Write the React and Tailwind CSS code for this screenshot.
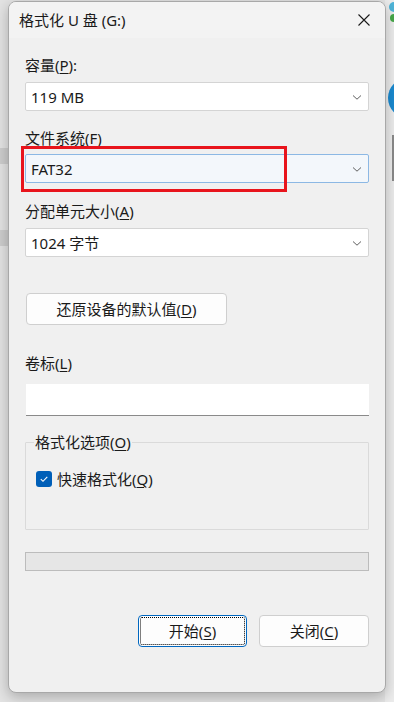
import React from 'react';

const font = { fontFamily: '"Noto Sans", "Noto Sans CJK SC", sans-serif' };

// Mnemonic label, e.g. 容量(P):
const Mn = ({ pre, k, post = ')' }) => (
    <span>
        {pre}(<span className="underline underline-offset-2 decoration-1">{k}</span>{post}
    </span>
);

const Chevron = () => (
    <svg width="12" height="12" viewBox="0 0 12 12" className="shrink-0">
        <path d="M2 4.5 L6 8.2 L10 4.5" fill="none" stroke="#606060" strokeWidth="1" />
    </svg>
);

const Select = ({ value, active }) => (
    <div
        className={`h-[29px] flex items-center justify-between pl-[5px] pr-[5px] rounded-[2px] border text-[15px] text-[#1a1a1a] ${
            active ? 'bg-[#f3f7fb] border-[#8cb8e4]' : 'bg-white border-[#d4d4d4]'
        }`}
    >
        <span className="leading-[20px]">{value}</span>
        <Chevron />
    </div>
);

const Label = ({ children, className = '' }) => (
    <div className={`text-[15px] leading-[20px] text-[#1a1a1a] ${className}`}>{children}</div>
);

export default function App() {
    return (
        <div className="relative w-[394px] h-[702px] bg-[#e3e3e3] overflow-hidden" style={font}>
            {/* background bits behind the dialog */}
            <div className="absolute left-0 top-[148px] w-[8px] h-[16px] bg-[#cdcdcd]" />
            <div className="absolute left-0 top-[230px] w-[8px] h-[16px] bg-[#cdcdcd]" />
            <div className="absolute right-0 top-0 w-[9px] h-[702px] bg-[#ececec]" />
            <div className="absolute left-[389px] top-[2px] w-[10px] h-[10px] rounded-full bg-[#4fb4d8]" />
            <div className="absolute left-[390px] top-[14px] w-[8px] h-[8px] rounded-full bg-[#46a848]" />
            <div className="absolute left-[388px] top-[78px] w-[40px] h-[40px] rounded-full bg-[#1a8ad0]" />
            <div className="absolute left-[392px] top-[135px] w-[4px] h-[46px] bg-[#8a8a8a]" />

            {/* dialog window */}
            <div className="absolute left-[8px] top-[1px] w-[378px] h-[692px] rounded-[8px] bg-[#f0f0f0] border border-[#a8a8a8] shadow-[0_4px_14px_rgba(0,0,0,0.25)] flex flex-col overflow-hidden">
                {/* title bar */}
                <div className="h-[36px] shrink-0 bg-[#f3f3f3] flex items-center justify-between pl-[10px] pr-[14px]">
                    <span className="text-[15px] leading-[20px] text-[#1a1a1a]">格式化 U 盘 (G:)</span>
                    <svg width="14" height="14" viewBox="0 0 14 14">
                        <path d="M1.5 1.5 L12.5 12.5 M12.5 1.5 L1.5 12.5" stroke="#1a1a1a" strokeWidth="1.1" />
                    </svg>
                </div>

                <div className="flex flex-col px-[16px]">
                    <Label className="mt-[17px]">
                        <Mn pre="容量" k="P" post="):" />
                    </Label>
                    <div className="mt-[7px]">
                        <Select value="119 MB" />
                    </div>

                    <Label className="mt-[17px]">
                        <Mn pre="文件系统" k="F" />
                    </Label>
                    <div className="mt-[6px]">
                        <Select value="FAT32" active />
                    </div>

                    <Label className="mt-[18px]">
                        <Mn pre="分配单元大小" k="A" />
                    </Label>
                    <div className="mt-[7px]">
                        <Select value="1024 字节" />
                    </div>

                    <div className="mt-[36px] w-[201px] h-[32px] ml-[1px] flex items-center justify-center rounded-[4px] border border-[#cfcfcf] bg-[#fdfdfd] text-[15px] text-[#1a1a1a]">
                        <Mn pre="还原设备的默认值" k="D" />
                    </div>

                    <Label className="mt-[28px]">
                        <Mn pre="卷标" k="L" />
                    </Label>
                    <div className="mt-[11px] ml-[1px] h-[32px] bg-white border-b border-[#8a8a8a]" />

                    {/* options group */}
                    <div className="relative mt-[26px] h-[88px] border border-[#dadada] rounded-[1px]">
                        <div className="absolute left-[8px] top-[-11px] px-[1px] bg-[#f0f0f0] text-[15px] leading-[20px] text-[#1a1a1a]">
                            <Mn pre="格式化选项" k="O" />
                        </div>
                        <div className="flex items-center gap-[5px] ml-[10px] mt-[26px]">
                            <div className="w-[16px] h-[16px] rounded-[3px] bg-[#005fb8] flex items-center justify-center">
                                <svg width="10" height="10" viewBox="0 0 10 10">
                                    <path d="M1.8 5.2 L4 7.3 L8.3 2.8" fill="none" stroke="white" strokeWidth="1.1" />
                                </svg>
                            </div>
                            <span className="text-[15px] leading-[20px] text-[#1a1a1a]">
                                <Mn pre="快速格式化" k="Q" />
                            </span>
                        </div>
                    </div>

                    {/* progress */}
                    <div className="mt-[22px] h-[19px] bg-[#e6e6e6] border border-[#bcbcbc]" />

                    {/* buttons */}
                    <div className="mt-[44px] flex justify-end gap-[12px]">
                        <div className="w-[109px] h-[32px] rounded-[4px] border border-[#0067c0] bg-[#fdfdfd] p-[1px]">
                            <div className="w-full h-full border border-dotted border-black rounded-[2px] flex items-center justify-center text-[15px] text-[#1a1a1a]">
                                <Mn pre="开始" k="S" />
                            </div>
                        </div>
                        <div className="w-[110px] h-[32px] rounded-[4px] border border-[#cfcfcf] bg-[#fdfdfd] flex items-center justify-center text-[15px] text-[#1a1a1a]">
                            <Mn pre="关闭" k="C" />
                        </div>
                    </div>
                </div>

                {/* highlight annotation */}
                <div className="absolute left-[12px] top-[144px] w-[266px] h-[46px] border-[3px] border-[#e8141c]" />
            </div>
        </div>
    );
}
